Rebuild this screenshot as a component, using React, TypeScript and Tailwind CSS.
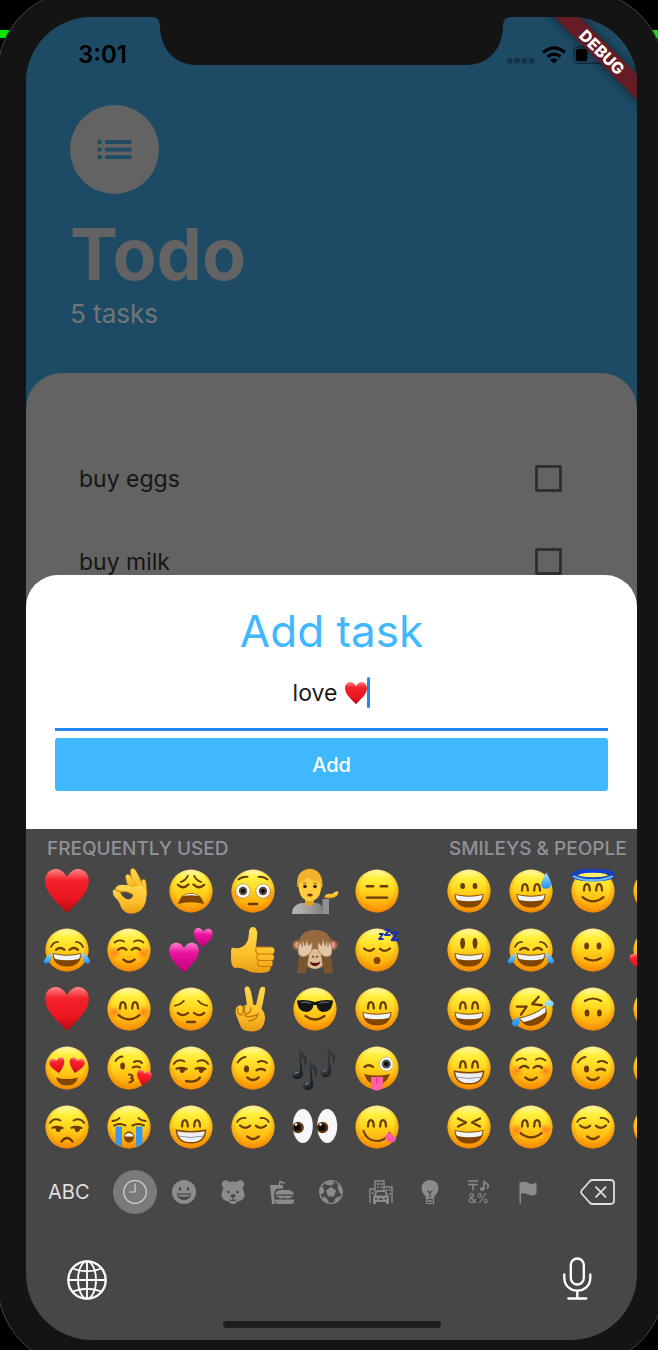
import React, { useState } from "react";
import type { ReactNode } from "react";
import { MdList } from "react-icons/md";

const BROWN = "#6b3c00";
const HEART = "M0 -5 C-1.6 -8 -4 -9 -6 -8.6 C-9 -8 -10.2 -5.5 -10 -2.6 C-9.4 3 -4.5 6.5 0 11.5 C4.5 6.5 9.4 3 10 -2.6 C10.2 -5.5 9 -8 6 -8.6 C4 -9 1.6 -8 0 -5Z";

function Defs() {
  return (
    <svg className="absolute size-0" aria-hidden="true">
      <defs>
        <linearGradient id="skin" x1="0" y1="0" x2="0" y2="1">
          <stop offset="0" stopColor="#fffbb4" />
          <stop offset="0.2" stopColor="#fff03e" />
          <stop offset="0.5" stopColor="#ffd41c" />
          <stop offset="0.8" stopColor="#ffb00f" />
          <stop offset="1" stopColor="#ff9a08" />
        </linearGradient>
        <radialGradient id="rim" cx="0.5" cy="0.44" r="0.58">
          <stop offset="0.66" stopColor="#f08a00" stopOpacity="0" />
          <stop offset="0.9" stopColor="#f08600" stopOpacity="0.6" />
          <stop offset="1" stopColor="#d96f00" stopOpacity="0.9" />
        </radialGradient>
        <radialGradient id="blush">
          <stop offset="0" stopColor="#ff6a1a" stopOpacity="0.8" />
          <stop offset="1" stopColor="#ff7a1a" stopOpacity="0" />
        </radialGradient>
        <linearGradient id="red" x1="0" y1="0" x2="0" y2="1">
          <stop offset="0" stopColor="#ff8587" />
          <stop offset="0.25" stopColor="#f4222c" />
          <stop offset="0.7" stopColor="#e81520" />
          <stop offset="1" stopColor="#b80610" />
        </linearGradient>
        <linearGradient id="pink" x1="0" y1="0" x2="0" y2="1">
          <stop offset="0" stopColor="#ff7fd0" />
          <stop offset="0.35" stopColor="#e8109c" />
          <stop offset="1" stopColor="#c4007e" />
        </linearGradient>
        <linearGradient id="hand" x1="0" y1="0" x2="0" y2="1">
          <stop offset="0" stopColor="#ffd84e" />
          <stop offset="0.6" stopColor="#fcc02b" />
          <stop offset="1" stopColor="#eb9c12" />
        </linearGradient>
        <linearGradient id="water" x1="0" y1="0" x2="0" y2="1">
          <stop offset="0" stopColor="#a5e3ff" />
          <stop offset="1" stopColor="#1a8ef0" />
        </linearGradient>
        <linearGradient id="shirt" x1="0" y1="0" x2="1" y2="0">
          <stop offset="0" stopColor="#b9b9b9" />
          <stop offset="0.6" stopColor="#9a9a9a" />
          <stop offset="1" stopColor="#7e7e7e" />
        </linearGradient>
        <linearGradient id="note" x1="0" y1="0" x2="0" y2="1">
          <stop offset="0" stopColor="#3d4850" />
          <stop offset="1" stopColor="#11171c" />
        </linearGradient>
      </defs>
    </svg>
  );
}

function Art({ children }: { children: ReactNode }) {
  return (
    <svg viewBox="0 0 46 46" className="size-[46px] shrink-0 overflow-visible" aria-hidden="true">
      {children}
    </svg>
  );
}

function Face({ children, blush = false }: { children?: ReactNode; blush?: boolean }) {
  return (
    <Art>
      <circle cx="23" cy="23" r="21.5" fill="url(#skin)" />
      <circle cx="23" cy="23" r="21.5" fill="url(#rim)" />
      {blush && (
        <>
          <circle cx="8.5" cy="26" r="7" fill="url(#blush)" />
          <circle cx="37.5" cy="26" r="7" fill="url(#blush)" />
        </>
      )}
      {children}
    </Art>
  );
}

function Line({ d, w = 2 }: { d: string; w?: number }) {
  return <path d={d} fill="none" stroke={BROWN} strokeWidth={w} strokeLinecap="round" strokeLinejoin="round" />;
}

function Dots({ ry = 3, y = 18 }: { ry?: number; y?: number }) {
  return (
    <g fill={BROWN}>
      <ellipse cx="16.6" cy={y} rx="2.4" ry={ry} />
      <ellipse cx="29" cy={y} rx="2.4" ry={ry} />
    </g>
  );
}

const Happy = () => <Line w={2.3} d="M14 22.5Q14.2 16.2 16.8 16.2Q19.6 16.2 19.8 22.5M26.2 22.5Q26.4 16.2 29 16.2Q31.8 16.2 32 22.5" />;
const Squint = () => <Line w={2.3} d="M12 22.8Q16.4 19.2 20.4 22.8M25.6 22.8Q30 19.2 34 22.8" />;
const Shut = () => <Line w={2.3} d="M10 21.5Q15 26 20 21.8M26 21.8Q31 26 36 21.5" />;
const Brows = () => <Line w={1.8} d="M8.5 15.5Q13 12 18 14.5M28 14.5Q33 12 37.5 15.5" />;
const Smile = () => <Line w={2.2} d="M12.5 29.2Q23 37.5 33.5 29.2" />;
const SmallSmile = () => <Line w={2.4} d="M17.4 32.6Q23 37.4 28.6 32.6" />;

function Grin() {
  return (
    <>
      <path d="M8.4 26Q23 29.5 37.6 26Q36.8 39.6 23 39.6Q9.2 39.6 8.4 26Z" fill="#834600" />
      <path d="M9.4 27Q23 30.4 36.6 27Q36.2 30.6 34.6 32Q23 34.4 11.4 32Q9.8 30.6 9.4 27Z" fill="#f1f4f8" />
    </>
  );
}

function Teeth() {
  return (
    <>
      <path d="M8.4 26.2Q23 29.2 37.6 26.2Q36.8 38.8 23 38.8Q9.2 38.8 8.4 26.2Z" fill="#eef0f5" stroke="#834600" strokeWidth="1.5" />
      <path d="M10 32Q23 35 36 32" fill="none" stroke="#9099a3" strokeWidth="1" />
    </>
  );
}

function Heart({ x, y, s, fill = "url(#red)", turn = 0 }: { x: number; y: number; s: number; fill?: string; turn?: number }) {
  return <path d={HEART} fill={fill} transform={`translate(${x} ${y}) rotate(${turn}) scale(${s})`} />;
}

const Tears = () => (
  <g fill="url(#water)">
    <path d="M8.5 25.5C8 32 5.5 37 2 36.5C-2 36 -.5 31 8.5 25.5Z" />
    <path d="M37.5 25.5C38 32 40.5 37 44 36.5C48 36 46.5 31 37.5 25.5Z" />
  </g>
);

const Winking = () => (
  <>
    <Line d="M7.6 17.5Q11 12.5 15.5 12M28 17Q33 14.5 37 18" w={2} />
    <ellipse cx="16.5" cy="24" rx="2.6" ry="3.6" fill={BROWN} />
    <Line d="M26.5 25.2Q31 22.8 35 25.2" w={2.4} />
  </>
);

const SideEyes = () => (
  <>
    <Line d="M5.8 19Q10 13 16.5 16.5M29.5 16.5Q36 13 40.2 19" w={1.8} />
    <Line d="M8.5 23.8Q13 22 18.5 24M27.5 23.8Q32 22 37.5 24" w={2.2} />
    <path d="M11.5 24H17.5Q16.5 28.4 13.8 28Q11.5 27.5 11.5 24ZM30.5 24H36.5Q35.5 28.4 32.8 28Q30.5 27.5 30.5 24Z" fill={BROWN} />
  </>
);

const emoji: Record<string, () => ReactNode> = {
  heart: () => <Art><Heart x={23} y={20} s={2.18} /></Art>,
  ok: () => (
    <Art>
      <g stroke="#cf8a12" strokeWidth="0.6" fill="url(#hand)">
        <path d="M34 24L36 12Q39.500 10 40 15L41 27Z" />
        <path d="M27 20L24.500 4Q24.500 -.5 28 .8Q30.500 2 38 20L36 26Z" />
        <path d="M22 19L19.500 9Q20 5 23.500 7Q26 9 32 21Z" />
      </g>
      <path
        fillRule="evenodd"
        fill="url(#hand)"
        d="M6.800 24Q6.500 21.500 9 21.500Q10 17.500 14 17Q20 16 26 19L35 17Q41 20 40.500 28Q40 38 34 43Q28 47 21 45Q15 42 14 36Q12.500 32 9 29.500Q6.800 27 6.800 24ZM14 24Q17 31 22.500 31.500Q27 30.500 27 26.500Q21 22.500 14 24Z"
      />
      <path d="M9 21.500Q13 23 14 24Q21 22.500 27 26.500" fill="none" stroke="#c17a0c" strokeWidth="1" />
    </Art>
  ),
  weary: () => (
    <Face>
      <Line d="M12.7 14Q17.5 12.5 19.8 7.8M33.3 14Q28.5 12.5 26.2 7.8" w={1.8} />
      <Line d="M9.8 16.8Q15 22 20.5 16.5M36.2 16.8Q31 22 25.5 16.5" w={2.3} />
      <path d="M9.8 36Q13 25 23 25Q33 25 36.2 36Q23 32.5 9.8 36Z" fill="#834600" />
      <path d="M15 28Q23 23.6 31 28Q23 26.6 15 28Z" fill="#fff" />
    </Face>
  ),
  flushed: () => (
    <Face blush>
      <Line d="M8.5 11.5Q12 8.3 17.7 8.8M37.5 11.5Q34 8.3 28.3 8.8" w={1.8} />
      {[13, 33].map((x) => (
        <g key={x}>
          <circle cx={x} cy="23" r="7.2" fill="#fff" stroke="#b57c3c" strokeWidth="0.7" />
          <circle cx={x} cy="23" r="4.2" fill="#5a4637" />
          <circle cx={x} cy="23" r="2" fill="#0d0907" />
        </g>
      ))}
      <Line d="M18.9 36H27.2" w={2.4} />
    </Face>
  ),
  person: () => (
    <Art>
      <path d="M0 46Q0 37 9 35H25Q31 35 31 46Z" fill="url(#shirt)" />
      <path d="M30.5 31H37V46H30.5Z" fill="#929292" />
      <path d="M32 29Q34 25 40 26Q45 22 46.5 24Q46 29 40 30Q35 31 32 29Z" fill="url(#hand)" />
      <path d="M13 26H22V36Q17 40 13 36Z" fill="#e5a01d" />
      <path d="M7 13Q7 5 18 5Q29 5 29 13V22Q27 33 18 33Q9 33 7 22Z" fill="#ffce3d" />
      <path d="M5.500 19Q3 3 17 .8Q31 1 30.500 19Q30 20 29 19Q29 16 27.500 13.500Q20 13 15 9Q12 14 8.500 14.500Q7 17 7 19.500Z" fill="#f2b128" />
      <circle cx="13" cy="18.5" r="1.8" fill="#402208" />
      <circle cx="23" cy="18.5" r="1.8" fill="#402208" />
      <path d="M11 15.500L14.500 15M21.500 15L25 15.500" stroke="#a96808" strokeWidth="1" />
      <ellipse cx="18" cy="27" rx="2.800" ry="1.500" fill="#8b2d15" />
    </Art>
  ),
  blank: () => <Face><Line d="M12.8 18.3H19.3M26.7 18.3H33.2M12.8 29.6H33.2" w={2.4} /></Face>,
  joy: () => (
    <Face>
      <Line d="M7 20Q9 15 14 14.8M39 20Q37 15 32 14.8" w={1.8} />
      <Squint /><Grin /><Tears />
    </Face>
  ),
  relaxed: () => <Face blush><Brows /><Squint /><SmallSmile /></Face>,
  hearts: () => (
    <Art>
      <Heart x={16} y={28.5} s={1.48} fill="url(#pink)" />
      <Heart x={35} y={9.5} s={0.94} fill="url(#pink)" turn={4} />
    </Art>
  ),
  thumb: () => (
    <Art>
      <path d="M1 24Q1 20 5 21Q13 22 17 15Q19 11 19 4Q21 -2 25.5 1Q28 4 27 10L26 20H40Q45 20 44.5 24Q44 27 42.5 27Q46 31 42 34Q44 38 40.5 40Q41 45 35 45.5Q23 47 16 43Q10 40 5 41Q1 40 1 31Z" fill="url(#hand)" />
      <path d="M26 21Q25 26 28.5 27H43M28 27Q25 32 29 33.5H42M28.5 33.5Q26 38 30 39.5H40.5M26 20L40 20" fill="none" stroke="#c87907" strokeWidth="1.1" strokeLinecap="round" />
    </Art>
  ),
  monkey: () => (
    <Art>
      <circle cx="5.5" cy="18" r="5.3" fill="#8e6339" /><circle cx="5.8" cy="18" r="3.2" fill="#e88d96" />
      <circle cx="40.5" cy="18" r="5.3" fill="#8e6339" /><circle cx="40.2" cy="18" r="3.2" fill="#e88d96" />
      <path d="M6 21Q6 3 23 3Q40 3 40 21Q40 41 23 42Q6 41 6 21Z" fill="#98693d" />
      <ellipse cx="23" cy="32" rx="9.5" ry="10" fill="#dcbd93" />
      <path d="M5 46L8 23L18 22L14 46ZM41 46L38 23L28 22L32 46Z" fill="#7b5430" />
      <path d="M6.5 27Q5 18 9 15L10 20L11 13L13 19L15 12L16.5 19L20 15Q21 25 16 28Q10 32 6.5 27ZM39.5 27Q41 18 37 15L36 20L35 13L33 19L31 12L29.5 19L26 15Q25 25 30 28Q36 32 39.5 27Z" fill="#e2c6aa" stroke="#a77b52" strokeWidth="0.7" />
      <path d="M20 29L22 30.5M26 29L24 30.5" stroke="#6b4020" strokeWidth="1.4" />
      <path d="M17.5 34.5Q23 37.5 28.5 34.5Q27 39 23 39Q19 39 17.5 34.5Z" fill="#5e0e13" />
    </Art>
  ),
  sleep: () => (
    <Face>
      <Shut />
      <ellipse cx="23" cy="33.5" rx="3.4" ry="3.5" fill="#834600" />
      <g fill="none" stroke="#1632b8" strokeLinejoin="round">
        <path strokeWidth="1.8" d="M25 7H29L25 12H29.5" />
        <path strokeWidth="2" d="M30.5 2.8H35.5L31 8H36.5" />
        <path strokeWidth="2.5" d="M37 5.5H43.5L38 13H45" />
      </g>
    </Face>
  ),
  blush: () => <Face blush><Happy /><Smile /></Face>,
  pensive: () => (
    <Face>
      <Line d="M6.8 19.7Q12.5 18.8 15.8 14.8M39.2 19.7Q33.5 18.8 30.2 14.8" w={1.8} />
      <Line d="M9.8 27Q15 31.3 20 27M26 27Q31 31.3 36.2 27" w={2.3} />
      <Line d="M19 36H27" w={2.3} />
    </Face>
  ),
  victory: () => (
    <Art>
      <g transform="translate(3 0)">
        <path d="M14 19L11.500 3Q12.500 -1 16 1Q18 3 20.500 19H23L26.5 4Q28 -1 32 1.5Q33 3 28.500 23Q32 26 32 33Q31 45 20 45.5Q9 46 7 39L3.5 30Q1 22 5 20Q8 18 10 21Q12 18 14 19Z" fill="url(#hand)" />
        <path d="M5 22Q3 28 8 29Q11 27 10 21M12 20Q10 26 13 28Q18 27 18 22M11 29Q16 33 25 28Q24 34 16 35" fill="none" stroke="#bd7309" strokeWidth="1.3" strokeLinecap="round" />
      </g>
    </Art>
  ),
  cool: () => (
    <Face>
      <path d="M5 14.5Q14 13 23 16Q32 13 41 14.5L40.5 18Q39 26 31 26Q25.5 25 24.5 19H21.5Q20.5 25 15 26Q7 26 5.5 18Z" fill="#151515" />
      <path d="M9 16.5Q14 15.5 19 17.5M27 17.5Q32 15.5 37 16.5" stroke="#60666b" strokeWidth="1.2" fill="none" />
      <Line d="M13.5 30Q23 37 32.5 30" w={2.2} />
    </Face>
  ),
  smileOpen: () => <Face><Happy /><Grin /></Face>,
  love: () => (
    <Face>
      <Heart x={13.3} y={19.5} s={0.76} turn={-12} />
      <Heart x={32.7} y={19.5} s={0.76} turn={12} />
      <path d="M12 32.5Q23 35.5 34 32.5Q32 40.5 23 40.5Q14 40.5 12 32.5Z" fill="#834600" />
    </Face>
  ),
  kiss: () => (
    <Face>
      <Line d="M9.5 16Q12.5 11.5 16.5 11.5M28 17Q33 14.5 36 18M26.8 22.5Q30.5 20.5 34 22.5" w={2} />
      <ellipse cx="16.6" cy="21" rx="2.4" ry="3.5" fill={BROWN} />
      <Line d="M23 29.5Q29 30 25 33Q30 35 23.5 37.5" w={2} />
      <Heart x={38} y={32} s={0.74} turn={12} />
    </Face>
  ),
  smirk: () => <Face><SideEyes /><Line d="M18 36Q28 38 32 32.5" w={2.3} /></Face>,
  wink: () => <Face><Winking /><SmallSmile /></Face>,
  notes: () => (
    <Art>
      {[[0, 0], [10.5, 11], [28.5, -2]].map(([x, y], i) => (
        <g key={x} transform={`translate(${x} ${y})`} opacity={i === 2 ? 0.8 : 1}>
          <ellipse cx="5.5" cy="30" rx="5.3" ry="4" fill="url(#note)" transform="rotate(-12 5.5 30)" />
          <path d="M8.5 30L6.5 1H8Q9 7 13 10Q17 15 12 22Q14 14 9 12L10.5 30Z" fill="url(#note)" />
          <path d="M2.5 29Q4 27 6 27.5" fill="none" stroke="#8594a0" strokeWidth="1" />
        </g>
      ))}
    </Art>
  ),
  tongue: () => (
    <Face>
      <Line d="M10.5 22Q15 18.5 19 22" w={2.3} />
      <circle cx="32.3" cy="19" r="7" fill="#fff" stroke="#bd8a5c" strokeWidth="0.6" />
      <circle cx="32.3" cy="19" r="4.6" fill="#5d5752" /><circle cx="32.3" cy="19" r="2.4" fill="#0b0b0b" />
      <path d="M10 29Q23 32 36 29Q32 40 23 40Q14 40 10 29Z" fill="#834600" />
      <path d="M17 32H29V39Q28 46 23 45.5Q17 46 17 39Z" fill="#ff62a8" />
      <path d="M23 33V39" stroke="#d72a78" strokeWidth="1" />
    </Face>
  ),
  unamused: () => <Face><SideEyes /><Line d="M17.5 37.5Q23 30.5 28.5 37.5" w={2.3} /></Face>,
  sob: () => (
    <Face>
      <Line d="M6.5 17Q11.5 16.5 13.5 14M39.5 17Q34.5 16.5 32.5 14M8 21.5Q13.5 18.5 19.5 21.5M26.5 21.5Q32.5 18.5 38 21.5" w={2} />
      <path d="M9.500 22.500H16V43L9.500 39.500ZM30 22.500H36.500V39.500L30 43Z" fill="#3b97ea" />
      <ellipse cx="23" cy="33" rx="5" ry="5.8" fill="#834600" />
      <path d="M19 31Q23 27 27 31V32.5H19Z" fill="#fff" />
    </Face>
  ),
  beam: () => <Face><Happy /><Teeth /></Face>,
  relieved: () => (
    <Face>
      <Line d="M7.2 18Q9.5 13.5 15.5 14M38.8 18Q36.5 13.5 30.5 14" w={1.8} />
      <Shut /><SmallSmile />
    </Face>
  ),
  eyes: () => (
    <Art>
      {[[10.8, 6], [35.2, 30.5]].map(([x, p]) => (
        <g key={x}>
          <ellipse cx={x} cy="22" rx="10" ry="17" fill="#f8f8fa" />
          <circle cx={p} cy="23.5" r="5.8" fill="#5e3512" />
          <circle cx={p - 0.5} cy="23.5" r="3.6" fill="#100a05" />
          <circle cx={p - 2} cy="20.5" r="1.2" fill="#fff" />
        </g>
      ))}
    </Art>
  ),
  yum: () => (
    <Face>
      <Happy />
      <Line d="M9.5 27Q13 37 23 37Q31 37 35.5 29" w={2.2} />
      <path d="M31 33.500Q33 28 37 28.500Q38 32 42.500 34Q41 39 36.500 38.500Q32 37 31 33.500Z" fill="#ff5ba4" />
    </Face>
  ),
  grinning: () => <Face><Dots /><Grin /></Face>,
  sweat: () => (
    <Face>
      <Happy /><Grin />
      <path d="M38.3 4.5Q43.5 13.5 43.2 16.5Q42.5 20.5 38 20.8Q33.5 20.5 33 16.5Q33.3 13.5 38.3 4.5Z" fill="url(#water)" />
    </Face>
  ),
  angel: () => (
    <Face>
      <Happy /><Smile />
      <ellipse cx="23" cy="7" rx="19.5" ry="4.3" fill="none" stroke="#143ec8" strokeWidth="4" />
      <path d="M4 8.5Q13 12.5 23 12.3Q33 12.5 42 8.5" fill="none" stroke="#68b4ff" strokeWidth="2.4" strokeLinecap="round" />
    </Face>
  ),
  smiley: () => <Face><Dots ry={5.6} y={16.3} /><Grin /></Face>,
  slight: () => <Face><Dots ry={3.6} y={19} /><Line d="M14.8 31Q23 36 31.2 31" w={2.1} /></Face>,
  rofl: () => (
    <Face>
      <g transform="rotate(-24 23 23)">
        <Line d="M11 15L20 19L11.5 24M35 15L26 19L34.5 24" w={2.3} />
        <Grin />
      </g>
      <path d="M36 18.500Q38 13.500 43 14.500Q47.500 16.500 44.500 20Q40 21.500 36 18.500ZM10.500 31Q13.500 36 10 39.500Q6 42 4 38Q3.500 34 10.500 31Z" fill="url(#water)" />
    </Face>
  ),
  upside: () => (
    <Face>
      <g transform="rotate(180 23 23)"><Dots ry={3.6} y={19} /><Line d="M14.8 31Q23 36 31.2 31" w={2.1} /></g>
    </Face>
  ),
  laugh: () => <Face><Line d="M12 14.5L20 18.5L12 22.5M34 14.5L26 18.5L34 22.5" w={2.3} /><Grin /></Face>,
  adore: () => <Face><Heart x={6} y={33} s={0.8} turn={-12} /></Face>,
  plain: () => <Face />,
};

const frequent = [
  "heart", "ok", "weary", "flushed", "person", "blank",
  "joy", "relaxed", "hearts", "thumb", "monkey", "sleep",
  "heart", "blush", "pensive", "victory", "cool", "smileOpen",
  "love", "kiss", "smirk", "wink", "notes", "tongue",
  "unamused", "sob", "beam", "relieved", "eyes", "yum",
];
const smileys = [
  "grinning", "sweat", "angel", "plain",
  "smiley", "joy", "slight", "adore",
  "smileOpen", "rofl", "upside", "plain",
  "beam", "relaxed", "wink", "plain",
  "laugh", "blush", "relieved", "plain",
];

function EmojiGroup({ title, names, grid }: { title: string; names: string[]; grid: string }) {
  return (
    <section className="shrink-0">
      <h2 className="pl-[11px] text-[19px] leading-6 font-medium whitespace-nowrap text-[#929297]">{title}</h2>
      <div className={grid}>
        {names.map((name, i) => (
          <button key={i} type="button" aria-label={name} className="flex h-[59px] items-center justify-center">
            {emoji[name]()}
          </button>
        ))}
      </div>
    </section>
  );
}

const categories: { name: string; art: ReactNode }[] = [
  {
    name: "Recent",
    art: (
      <g fill="none" stroke="#d0d0d0" strokeWidth="1.2">
        <circle cx="12" cy="12" r="11.3" />
        <path d="M12 3.5V12H6" />
      </g>
    ),
  },
  {
    name: "Smileys",
    art: (
      <>
        <circle cx="12" cy="12" r="12" fill="#8b8b8b" />
        <g fill="#474747"><ellipse cx="8" cy="8.7" rx="1.3" ry="1.8" /><ellipse cx="16" cy="8.7" rx="1.3" ry="1.8" /></g>
        <path d="M5 13.5H19Q18.5 20 12 20Q5.500 20 5 13.500Z" fill="#474747" />
        <path d="M6.500 14.800H17.500V16.300Q12 17.200 6.500 16.300Z" fill="#8b8b8b" />
      </>
    ),
  },
  {
    name: "Animals",
    art: (
      <>
        <path d="M4.500 .3Q7 0 8 2Q12 1 16 2Q17 0 19.500 .3Q24 1 23 5.500Q22.500 7 21.500 7.500Q22 10 23 12Q25 18 20 20.500Q18 21 16.500 21Q15.500 24 12 24Q8.500 24 7.500 21Q5.500 21 4 20.500Q-1 18 1 12Q2 10 2.500 7.500Q1.500 7 1 5.500Q0 1 4.500 .3Z" fill="#8b8b8b" />
        <g fill="#474747"><circle cx="7.500" cy="12" r="1.300" /><circle cx="16.500" cy="12" r="1.300" /><ellipse cx="12" cy="15.800" rx="2.600" ry="1.600" /></g>
        <path d="M12 17V20M8.800 19.500Q10.500 21.500 12 20Q13.500 21.500 15.200 19.500" fill="none" stroke="#474747" strokeWidth="1.100" />
      </>
    ),
  },
  {
    name: "Food",
    art: (
      <g fill="#8b8b8b">
        <path d="M0 5H8.500L9.500 .5L15 2.500L14.500 4L10.500 2.700L10 5H13V8.500H7Q4 11 4 14L5 24H2Z" />
        <path d="M5.200 14.500Q6 10 11 10H18Q23 10 23.800 14.500ZM5 15.700H24L18 18.700L14.500 17.500L11 18.700ZM5.200 19.500H24V21Q24 24 21 24H8Q5.200 24 5.200 21Z" />
      </g>
    ),
  },
  {
    name: "Activity",
    art: (
      <>
        <circle cx="12" cy="12" r="11.300" fill="none" stroke="#8b8b8b" strokeWidth="1.300" />
        <g fill="#8b8b8b">
          <path d="M12 7L17 10.500L15 16.500H9L7 10.500ZM6 2L13 1L15.500 3.500L12 5.500L6.500 4.500ZM18.500 4L22.500 8L23 14L20.500 13L19 8.500ZM1.500 7L4.500 7.500L5.200 12L1.500 15L0.800 11ZM4 16.500L7.500 18L10 22.500L6 21.500L3 18ZM15 22.500L16.500 18L21 16L20.500 18.500L18 22Z" />
        </g>
      </>
    ),
  },
  {
    name: "Travel",
    art: (
      <>
        <path d="M1 23V9H6V1H15V7H23V23M6 9V12M15 7V11" fill="none" stroke="#8b8b8b" strokeWidth="1.400" />
        <path d="M8 3H10V5H8ZM11.500 3H13.500V5H11.500ZM8 6.500H10V8H8ZM11.500 6.500H13.500V8H11.500ZM17 9H18.500V11H17ZM20 9H21.500V11H20ZM20 13H21.500V15H20ZM3 12H4.500V14H3ZM6.500 11.500Q7 10.200 9 10.200H15Q17 10.200 17.500 11.500L19 15.500Q20 16 20 17.500V24H17V22H7V24H4V17.500Q4 16 5 15.500Z" fill="#8b8b8b" />
        <path d="M7 15.500L8.200 12H15.800L17 15.500ZM6 18H8.500V19.500H6ZM15.500 18H18V19.500H15.500ZM10 18.500H14V20H10Z" fill="#474747" />
      </>
    ),
  },
  {
    name: "Objects",
    art: (
      <>
        <path d="M12 0Q20.500 .5 20.500 8.500Q20.500 12 17.500 15Q16 17 16 19V24H8V19Q8 17 6.500 15Q3.500 12 3.500 8.500Q3.500 .5 12 0Z" fill="#8b8b8b" />
        <path d="M9.500 10.500L12 13L14.500 10.500M12 13V18M9.800 19.500H14.200V22.500H9.800Z" fill="none" stroke="#474747" strokeWidth="1.100" />
      </>
    ),
  },
  {
    name: "Symbols",
    art: (
      <>
        <path d="M1 1H11M1 4.500H11M6 4.500V10.500M17 9V.8Q18 3.500 21 4.500Q22 6.500 20 8.500" fill="none" stroke="#8b8b8b" strokeWidth="1.500" />
        <ellipse cx="15.300" cy="9" rx="2.400" ry="1.800" fill="#8b8b8b" />
        <text x="1" y="23" fontSize="13" fill="#8b8b8b" className="font-[Inter,sans-serif]">&amp;%</text>
      </>
    ),
  },
  {
    name: "Flags",
    art: <path d="M3.500 1.500H4.500V2.500Q9 1 12 3Q16 5 20.500 2.500V14Q16 16.500 12 14.500Q8 12.500 5 14V23.500H3.500Z" fill="#8b8b8b" />,
  },
];

function StatusBar() {
  return (
    <div className="flex h-[72px] items-center justify-between pt-[3px] pr-[26px] pl-[52px] text-black">
      <span className="text-[24px] leading-8 font-semibold">3:01</span>
      <div className="flex items-center gap-[7px]">
        <svg viewBox="0 0 28 20" className="h-5 w-7 fill-black/30" aria-hidden="true">
          {[0, 7.300, 14.600, 21.900].map((x) => (
            <rect key={x} x={x} y="13" width="5.600" height="5.600" rx="1.800" />
          ))}
        </svg>
        <svg viewBox="0 0 24 18" className="h-[18px] w-6" fill="none" stroke="#000" strokeWidth="3.200" aria-hidden="true">
          <path d="M1.200 6.500Q12 -2.700 22.800 6.500M5.500 10.800Q12 5.600 18.500 10.800" />
          <path d="M8.300 13.800Q12 10.800 15.700 13.800L12 17.600Z" fill="#000" stroke="none" />
        </svg>
        <svg viewBox="0 0 38 18" className="h-[18px] w-[38px]" aria-hidden="true">
          <rect x="0.700" y="0.700" width="33" height="16.600" rx="4.500" fill="none" stroke="#000" strokeOpacity="0.400" strokeWidth="1.400" />
          <rect x="2.800" y="2.800" width="11.500" height="12.400" rx="2.500" />
          <path d="M35.500 6Q37.500 7 37.500 9Q37.500 11 35.500 12Z" fillOpacity="0.400" />
        </svg>
      </div>
    </div>
  );
}

function Task({ id, label }: { id: string; label: string }) {
  return (
    <li className="flex h-[83px] items-center justify-between">
      <label htmlFor={id} className="text-[23px] leading-8 text-[#161616]">{label}</label>
      <input id={id} type="checkbox" className="size-[27px] appearance-none rounded-[2px] border-[3px] border-[#303030]" />
    </li>
  );
}

export default function App() {
  const [task, setTask] = useState("love");
  return (
    <div className="relative overflow-hidden bg-black font-[Inter,sans-serif]">
      <Defs />
      <div className="absolute inset-x-0 top-[30px] h-2 bg-[#00e600]" />
      <div className="relative -mt-[10px] -mr-[7px] -mb-[17px] -ml-[3px] rounded-[84px] border border-[#444] bg-[#141414] pt-[26px] pr-[27px] pb-[26px] pl-[28px]">
        <div className="relative overflow-hidden rounded-[66px] bg-[#474747]">
          <main className="bg-[#1d4a64]">
            <StatusBar />
            <header className="px-11 pt-4 pb-[43px]">
              <div className="flex size-[89px] items-center justify-center rounded-full bg-[#636363]">
                <MdList className="size-[45px] text-[#1d4a64]" aria-hidden="true" />
              </div>
              <h1 className="mt-4 text-[72px] leading-[88px] font-bold text-[#636363]">Todo</h1>
              <p className="text-[26px] leading-8 text-[#717577]">5 tasks</p>
            </header>
            <ul className="-mb-[30px] h-[232px] overflow-hidden rounded-t-[36px] bg-[#636363] pt-16 pr-[75px] pl-[53px]">
              <Task id="eggs" label="buy eggs" />
              <Task id="milk" label="buy milk" />
            </ul>
          </main>

          <form
            className="relative rounded-t-[32px] bg-white px-[29px] pt-7 pb-[38px]"
            onSubmit={(e) => e.preventDefault()}
          >
            <h2 className="text-center text-[44px] leading-[56px] text-[#40b8ff]">Add task</h2>
            <div className="mt-3 flex h-[60px] items-start justify-center border-b-[3px] border-[#2386f5] pt-[6px]">
              <input
                aria-label="Task name"
                className="field-sizing-content mr-2 bg-transparent text-[23px] leading-8 text-[#1c1c1c] outline-none"
                value={task}
                onChange={(e) => setTask(e.target.value)}
              />
              <svg viewBox="0 0 24 32" className="h-8 w-[22px] overflow-visible" aria-hidden="true">
                <Heart x={12} y={14.500} s={1.200} />
              </svg>
              <span className="h-[31px] w-[3px] rounded-full bg-[#2386f5]" />
            </div>
            <button type="submit" className="mt-[7px] h-[53px] w-full rounded-[3px] bg-[#40b8ff] text-[20px] font-medium text-white">
              Add
            </button>
          </form>

          <div className="pt-2">
            <div className="flex gap-[30px] overflow-hidden pl-[10px]">
              <EmojiGroup title="FREQUENTLY USED" names={frequent} grid="grid grid-cols-[repeat(6,62px)]" />
              <EmojiGroup title="SMILEYS & PEOPLE" names={smileys} grid="grid grid-cols-[repeat(4,62px)]" />
            </div>
            <div className="flex h-[72px] items-center px-[22px]">
              <button type="button" className="w-[62px] text-left text-[20px] text-[#dedede]">ABC</button>
              <div className="grid flex-1 grid-cols-9">
                {categories.map((c, i) => (
                  <button key={c.name} type="button" aria-label={c.name} className="flex items-center justify-center">
                    <span className={i === 0 ? "flex size-11 items-center justify-center rounded-full bg-[#7a7a7a]" : "flex"}>
                      <svg viewBox="0 0 24 24" className="size-6 overflow-visible" aria-hidden="true">{c.art}</svg>
                    </span>
                  </button>
                ))}
              </div>
              <button type="button" aria-label="Delete" className="flex w-[62px] justify-end">
                <svg viewBox="0 0 35 26" className="h-[26px] w-[35px]" fill="none" stroke="#e0e0e0" strokeWidth="1.800" strokeLinecap="round" strokeLinejoin="round" aria-hidden="true">
                  <path d="M12.500 1H30.500Q34 1 34 4.500V21.500Q34 25 30.500 25H12.500Q11 25 10 24L1.600 14.500Q.6 13 1.600 11.500L10 2Q11 1 12.500 1ZM16 8.200L25.500 17.800M25.500 8.200L16 17.800" />
                </svg>
              </button>
            </div>
            <div className="flex h-[73px] items-end justify-between px-10">
              <button type="button" aria-label="Next keyboard" className="flex">
                <svg viewBox="0 0 42 42" className="size-[42px]" fill="none" stroke="#fff" strokeWidth="1.800" aria-hidden="true">
                  <circle cx="21" cy="21" r="18.700" strokeWidth="2.300" />
                  <ellipse cx="21" cy="21" rx="9" ry="18.700" />
                  <path d="M21 2V40M2 21H40M6.500 9.500Q21 15 35.500 9.500M6.500 32.500Q21 27 35.500 32.500" />
                </svg>
              </button>
              <button type="button" aria-label="Dictate" className="flex">
                <svg viewBox="0 0 40 44" className="h-11 w-10" fill="none" stroke="#fff" strokeWidth="2.300" strokeLinecap="round" aria-hidden="true">
                  <rect x="13.800" y="1.500" width="13" height="26" rx="6.500" />
                  <path d="M7.300 17.500V20.500C7.300 38 33.300 38 33.300 20.500V17.500M20.300 34V41.500M11.300 41.500H29.300" />
                </svg>
              </button>
            </div>
            <div className="flex h-[39px] items-end justify-center pb-3">
              <div className="h-[7px] w-[218px] rounded-full bg-[#1e1e1e]" />
            </div>
          </div>

          <div className="absolute top-[26px] -right-[45px] flex h-[18px] w-40 rotate-45 items-center justify-center bg-[#651c24] text-[16px] leading-[18px] font-extrabold text-white shadow-[0_0_10px_rgba(0,0,0,0.5)]">
            DEBUG
          </div>
          <svg viewBox="0 0 365 49" className="absolute inset-x-0 top-0 mx-auto h-[49px] w-[365px]" aria-hidden="true">
            <path d="M0 0H3Q11 0 11 9C11 31 25 48 48 48H317C340 48 354 31 354 9Q354 0 362 0H365Z" fill="#141414" />
          </svg>
        </div>
      </div>
    </div>
  );
}
